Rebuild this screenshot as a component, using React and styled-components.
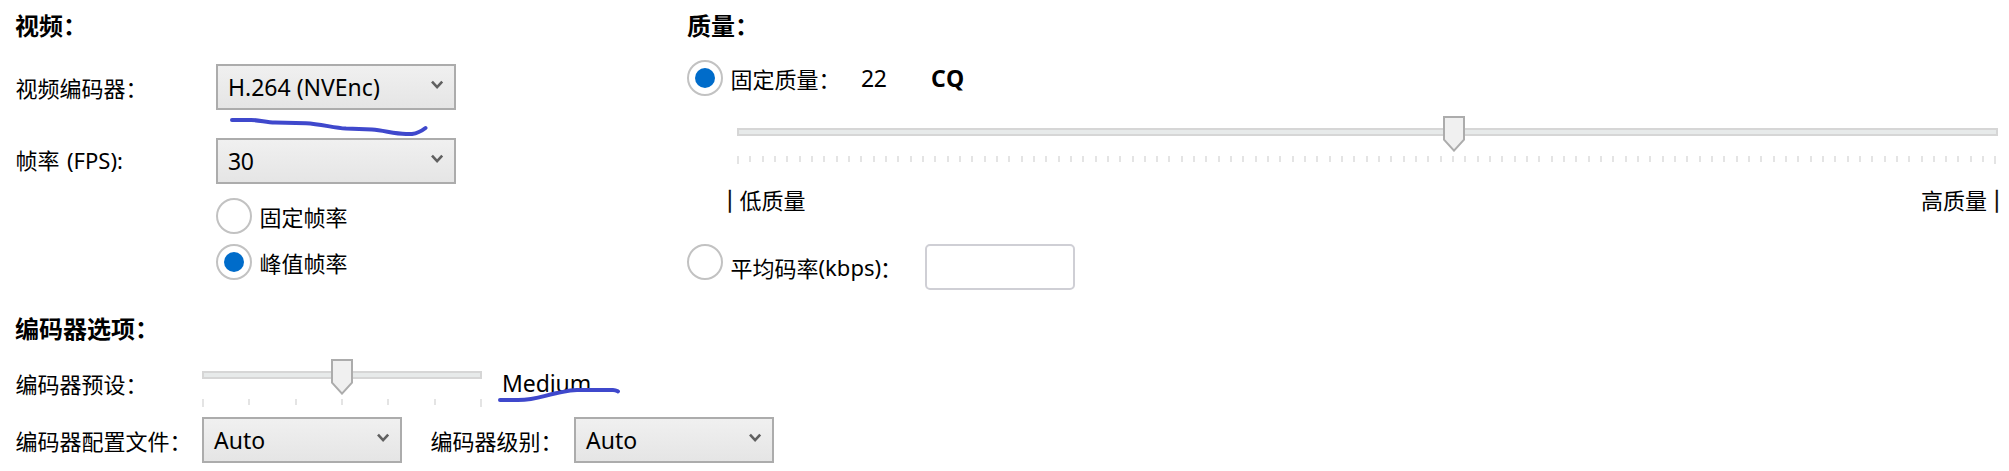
import React from "react";
import styled, { createGlobalStyle } from "styled-components";

const GlobalStyle = createGlobalStyle`
  *, *::before, *::after { box-sizing: border-box; }
  body {
    margin: 0;
    background: #fff;
    color: #000;
    font-family: "Noto Sans", "Noto Sans CJK SC", sans-serif;
    font-size: 22px;
  }
`;

const Page = styled.main`
  position: relative;
  display: grid;
  grid-template-columns: 671px 1311px;
  width: 2009px;
  height: 471px;
  padding: 11px 11px 0 16px;
  overflow: hidden;
  background: #fff;
`;

const Column = styled.section`
  display: flex;
  flex-direction: column;
`;

const Heading = styled.h2`
  margin: ${(p) => p.$top || 0}px 0 0 ${(p) => p.$left || 0}px;
  height: 28px;
  font: 700 24px/28px "Noto Sans CJK SC", sans-serif;
`;

const Row = styled.div`
  display: flex;
  align-items: ${(p) => p.$align || "center"};
  height: ${(p) => p.$height}px;
  margin-top: ${(p) => p.$top || 0}px;
  padding-left: ${(p) => p.$indent || 0}px;
`;

const Text = styled.span`
  flex: none;
  width: ${(p) => (p.$width ? `${p.$width}px` : "auto")};
  padding-top: ${(p) => p.$drop || 0}px;
  font-family: "Noto Sans CJK SC", sans-serif;
  font-size: 22px;
  line-height: 30px;
  text-indent: -0.5px;
  white-space: pre;
`;

const Latin = styled.span`
  flex: none;
  width: ${(p) => (p.$width ? `${p.$width}px` : "auto")};
  font-family: "Noto Sans", sans-serif;
  font-size: ${(p) => p.$size || 22}px;
  font-weight: ${(p) => (p.$bold ? 700 : 400)};
  letter-spacing: ${(p) => p.$track || 0}px;
  line-height: 30px;
  white-space: pre;
`;

const ComboBox = styled.div`
  flex: none;
  display: flex;
  align-items: center;
  justify-content: space-between;
  width: ${(p) => p.$width}px;
  height: 46px;
  padding: 0 10px;
  border: 2px solid #acacac;
  background: linear-gradient(#f0f0f0, #e5e5e5);
`;

const Arrow = styled.svg`
  display: block;
  width: 13px;
  height: 10px;
  margin-bottom: 4px;
`;

const RadioMark = styled.span`
  flex: none;
  display: grid;
  place-items: center;
  width: 36px;
  height: 36px;
  margin-right: 8px;
  border: 2px solid #c2c2c2;
  border-radius: 50%;
  background: #fff;
`;

const RadioDot = styled.span`
  width: 20px;
  height: 20px;
  border-radius: 50%;
  background: #006cca;
`;

const SliderBox = styled.div`
  position: relative;
  flex: none;
  width: ${(p) => p.$width}px;
  height: 48px;
  padding-top: 12px;
`;

const Track = styled.div`
  height: 8px;
  border: 2px solid #d6d6d6;
  background: #e7eaea;
`;

const Ticks = styled.div`
  display: flex;
  justify-content: space-between;
  margin-top: 20px;
`;

const Tick = styled.i`
  width: 2px;
  height: 6px;
  background: #e4e4e4;
  &:first-child, &:last-child { height: 8px; }
`;

const Thumb = styled.svg`
  position: absolute;
  top: 0;
  width: 22px;
  height: 36px;
  transform: translateX(-11px);
`;

const NumberInput = styled.input`
  flex: none;
  width: 150px;
  height: 46px;
  padding: 0 8px;
  border: 2px solid #cfcfd5;
  border-radius: 5px;
  background: #fff;
  outline: none;
  font: inherit;
`;

const ScaleLabels = styled.div`
  display: flex;
  justify-content: space-between;
  height: 30px;
  margin-top: 20px;
  padding: 0 0 0 40px;
`;

const ScaleLabel = styled.div`
  display: flex;
  align-items: center;
  gap: ${(p) => p.$gap}px;
  margin-right: ${(p) => p.$right || 0}px;
`;

const Bar = styled.span`
  width: 6px;
  font: 500 20px/28px "Noto Sans CJK SC", sans-serif;
  -webkit-text-stroke: 0.3px #000;
`;

const PenMarks = styled.svg`
  position: absolute;
  inset: 0;
  width: 2009px;
  height: 471px;
  pointer-events: none;
`;

function Combo({ width, value, track }) {
  return (
    <ComboBox $width={width}>
      <Latin $track={track} $size={23}>{value}</Latin>
      <Arrow viewBox="0 0 13 10">
        <path d="M1 1.7 L6.1 7.2 L11.2 1.7" fill="none" stroke="#606060" strokeWidth="2.6" />
      </Arrow>
    </ComboBox>
  );
}

function Radio({ checked }) {
  return <RadioMark>{checked && <RadioDot />}</RadioMark>;
}

function Slider({ width, intervals, value }) {
  const left = 1 + ((width - 2) * value) / intervals;
  return (
    <SliderBox $width={width}>
      <Track />
      <Ticks>
        {Array.from({ length: intervals + 1 }, (_, i) => <Tick key={i} />)}
      </Ticks>
      <Thumb viewBox="0 0 22 36" style={{ left: Math.round(left) }}>
        <path d="M1 1 H21 V23.6 L11 34.6 L1 23.6 Z" fill="#f0f0f0" stroke="#acacac" strokeWidth="2" />
      </Thumb>
    </SliderBox>
  );
}

export default function App() {
  return (
    <>
      <GlobalStyle />
      <Page>
        <Column>
          <Heading $left={-1}>视频：</Heading>
          <Row $height={46} $top={25}>
            <Text $width={200}>视频编码器：</Text>
            <Combo width={240} value="H.264 (NVEnc)" />
          </Row>
          <Row $height={46} $top={28}>
            <Row $height={46} $align="flex-start">
              <Text $width={51} $drop={6}>帧率</Text>
              <Row $height={43}>
                <Latin $width={149}>(FPS):</Latin>
              </Row>
            </Row>
            <Combo width={240} value="30" track={-0.4} />
          </Row>
          <Row $height={36} $top={14} $indent={200}>
            <Radio />
            <Text>固定帧率</Text>
          </Row>
          <Row $height={36} $top={10} $indent={200}>
            <Radio checked />
            <Text>峰值帧率</Text>
          </Row>
          <Heading $top={34} $left={-1}>编码器选项：</Heading>
          <Row $height={48} $top={17}>
            <Text $width={186}>编码器预设：</Text>
            <Slider width={280} intervals={6} value={3} />
            <Row $height={48} $indent={20}>
              <Latin $size={23} $track={-0.1}>Medium</Latin>
            </Row>
          </Row>
          <Row $height={46} $top={10}>
            <Text $width={186}>编码器配置文件：</Text>
            <Combo width={200} value="Auto" />
            <Row $height={46} $indent={29}>
              <Text $width={143}>编码器级别：</Text>
            </Row>
            <Combo width={200} value="Auto" />
          </Row>
        </Column>

        <Column>
          <Heading>质量：</Heading>
          <Row $height={36} $top={21}>
            <Radio checked />
            <Text $width={130}>固定质量：</Text>
            <Latin $width={70} $size={23} $track={-0.4}>22</Latin>
            <Latin $bold $size={23} $track={0.8}>CQ</Latin>
          </Row>
          <Row $height={48} $top={20} $indent={50}>
            <Slider width={1261} intervals={102} value={58} />
          </Row>
          <ScaleLabels>
            <ScaleLabel $gap={7}>
              <Bar>|</Bar>
              <Text>低质量</Text>
            </ScaleLabel>
            <ScaleLabel $gap={7} $right={-2}>
              <Text>高质量</Text>
              <Bar>|</Bar>
            </ScaleLabel>
          </ScaleLabels>
          <Row $height={46} $top={30} $align="flex-start">
            <Radio />
            <Text $drop={8}>平均码率</Text>
            <Row $height={46}>
              <Latin $width={62}>(kbps)</Latin>
            </Row>
            <Text $width={44} $drop={8}>：</Text>
            <NumberInput aria-label="平均码率" />
          </Row>
        </Column>

        <PenMarks viewBox="0 0 2009 471" fill="none" stroke="#3f48cc" strokeWidth="4" strokeLinecap="round" strokeLinejoin="round">
          <path d="M232 120 H251 C259 120 266 122.3 275 122.6 L306 123.3 C320 124 333 127.6 346 128.6 L372 129.5 C384 130.5 394 133.5 406 134 H412 C417 133.4 421 131.5 425.5 128" />
          <path d="M500 400 H518 C536 400 544 395.5 556 393.3 C564 392 567 390.2 577 390 H613 C615.5 390 616.5 390.6 618 391.4" />
        </PenMarks>
      </Page>
    </>
  );
}
